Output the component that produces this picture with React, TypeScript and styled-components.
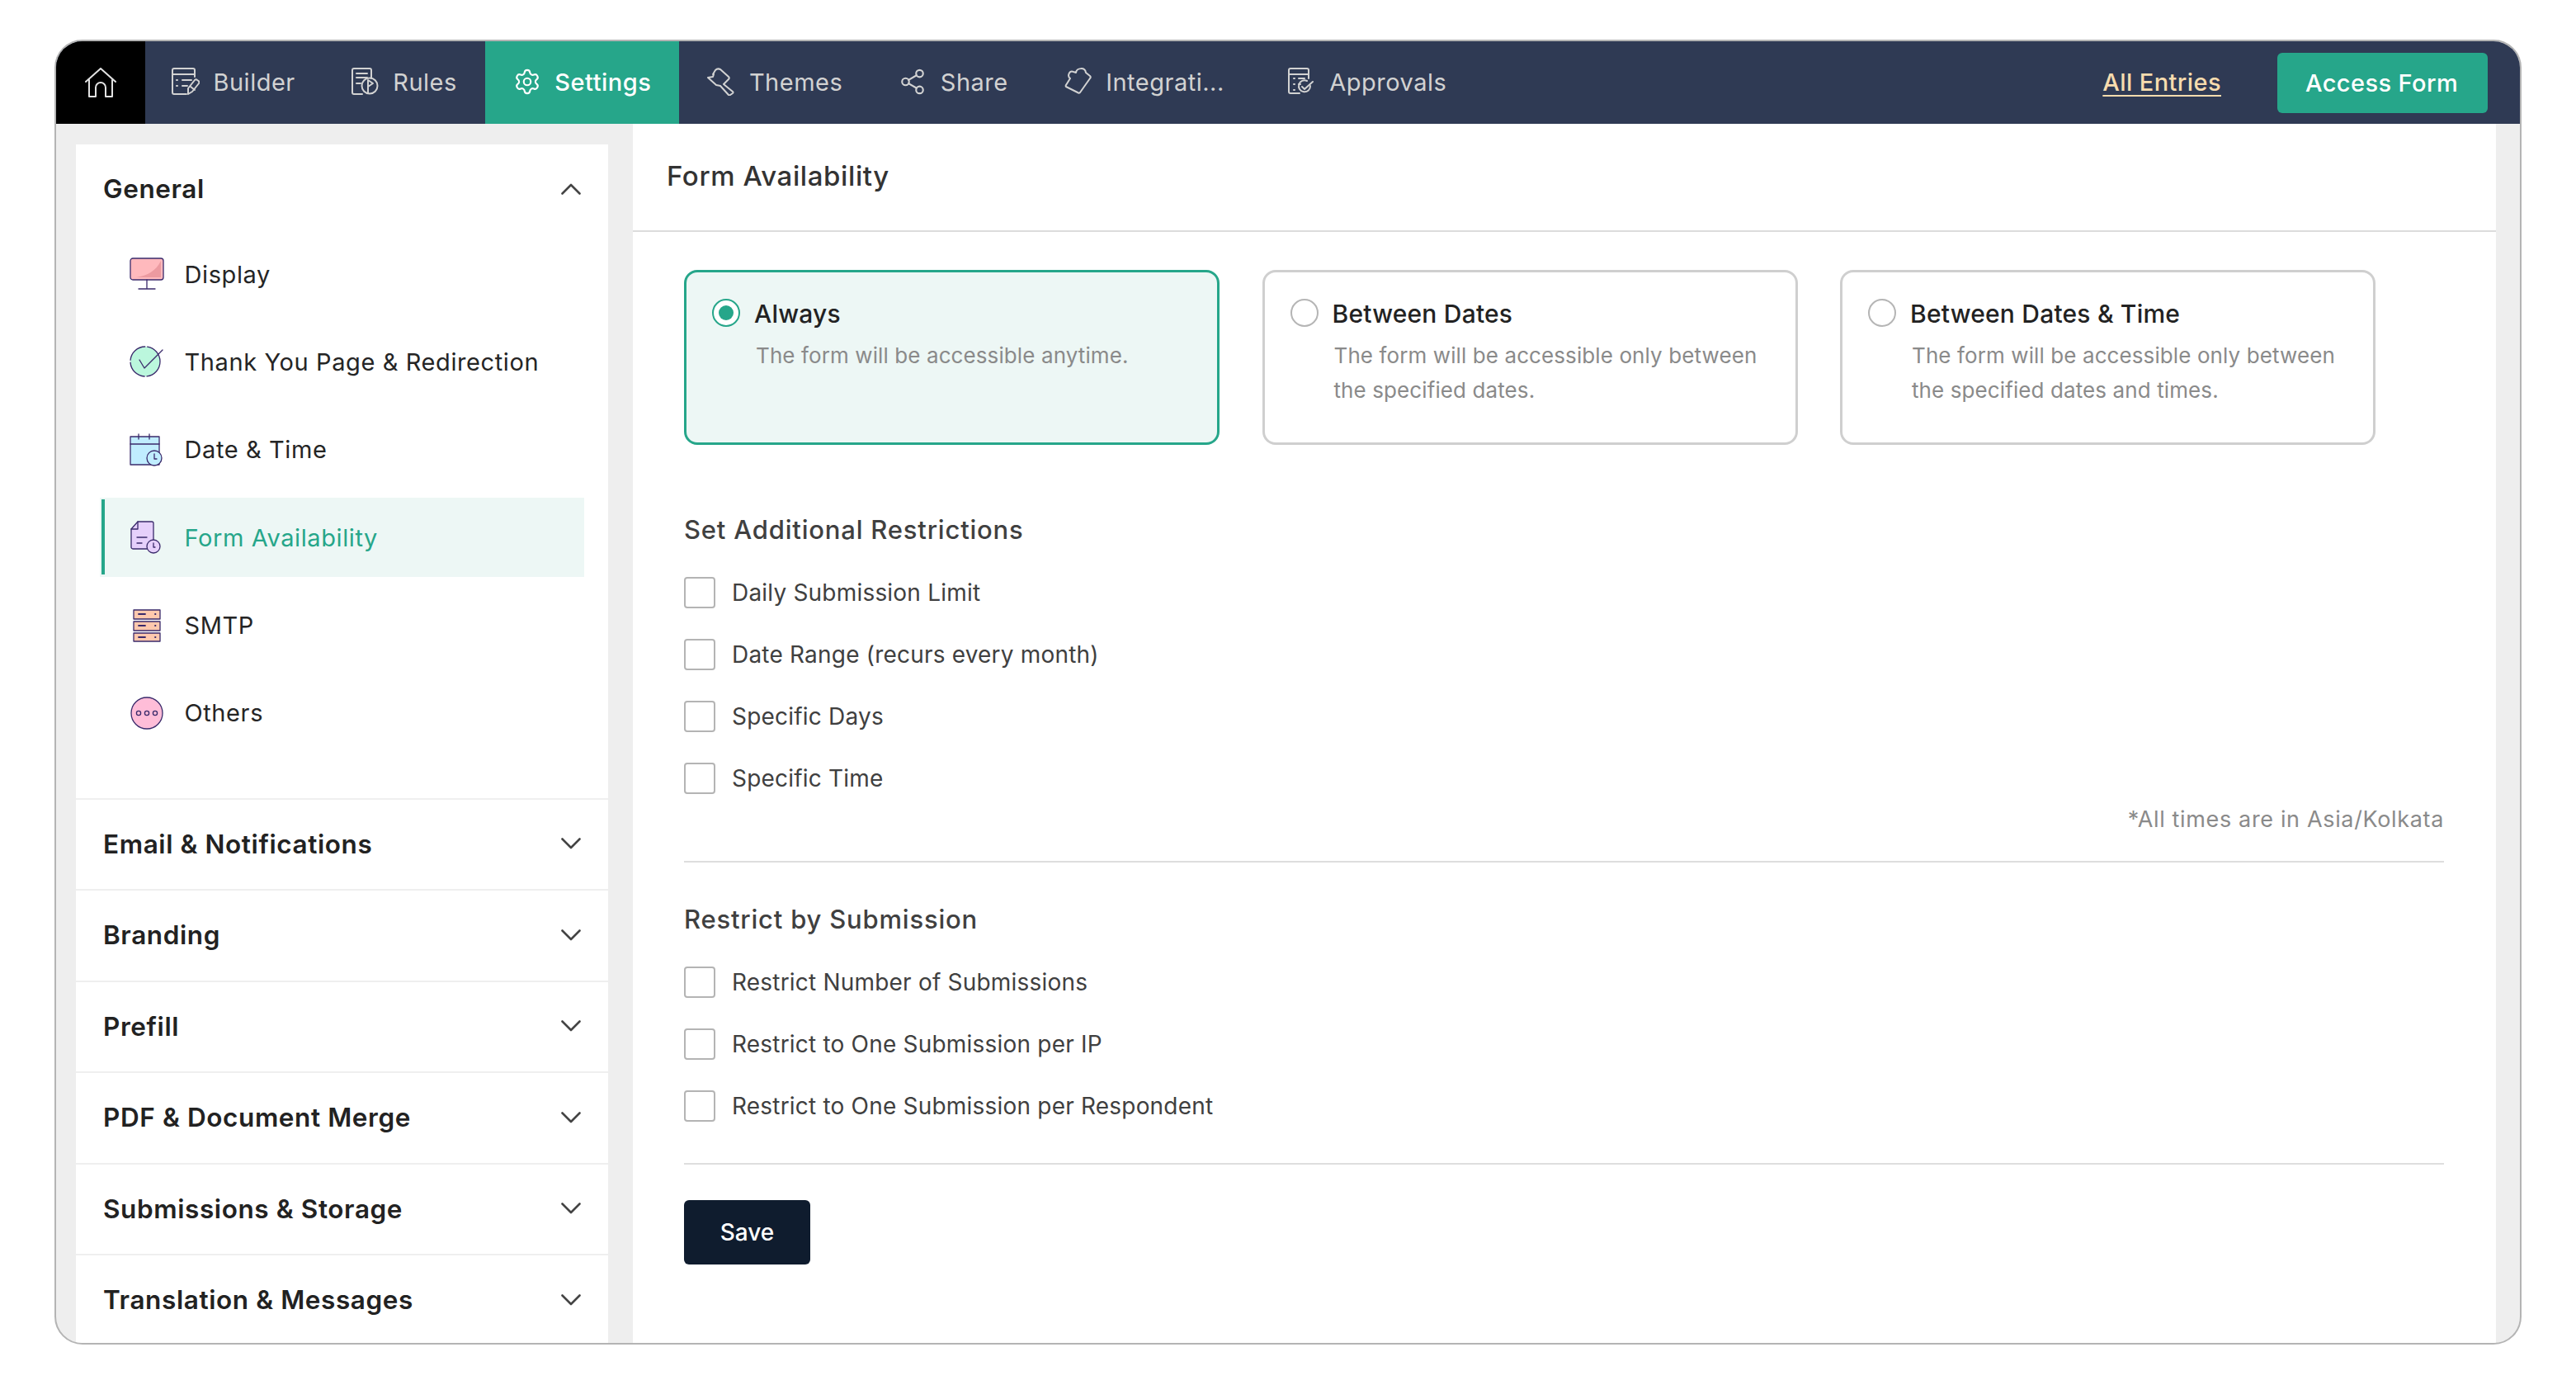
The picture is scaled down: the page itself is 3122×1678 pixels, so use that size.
import React from "react";
import styled, { createGlobalStyle } from "styled-components";
import { Settings as SettingsIcon, Share2 } from "lucide-react";

const Global = createGlobalStyle`
  html, body { margin: 0; padding: 0; background: #fff; }
  * { box-sizing: border-box; }
  body { font-family: Inter, "Noto Sans", sans-serif; -webkit-font-smoothing: antialiased; }
`;

const Page = styled.div`
  width: 3122px;
  height: 1678px;
  padding: 48px 0 0 66px;
  background: #fff;
`;
const Frame = styled.div`
  width: 2990px;
  height: 1581px;
  border: 2px solid #b4b4b4;
  border-radius: 34px;
  overflow: hidden;
  display: flex;
  flex-direction: column;
  background: #eeeeee;
`;
const Nav = styled.nav`
  height: 100px;
  flex: none;
  display: flex;
  align-items: stretch;
  background: #2f3a54;
`;
const HomeTab = styled.div`
  width: 108px;
  background: #000;
  display: flex;
  align-items: center;
  justify-content: center;
  color: #e2e2e2;
`;
const NavItem = styled.div<{ $active?: boolean; $extra?: number; $first?: boolean }>`
  display: flex;
  align-items: center;
  gap: 16.5px;
  padding: 0 34px 2px ${(p) => (p.$first ? 32 : 34)}px;
  margin-right: ${(p) => p.$extra ?? 0}px;
  background: ${(p) => (p.$active ? "#26a68a" : "transparent")};
  color: ${(p) => (p.$active ? "#ffffff" : "#d2d2d2")};
  font-size: 29px;
  font-weight: ${(p) => (p.$active ? 500 : 400)};
  letter-spacing: 0.5px;
  white-space: nowrap;
  svg { flex: none; }
`;
const NavSpacer = styled.div`
  flex: 1;
`;
const AllEntries = styled.a`
  align-self: center;
  margin-right: 68px;
  margin-bottom: 2px;
  color: #f7dcae;
  font-size: 29px;
  font-weight: 500;
  letter-spacing: 0.4px;
  text-decoration: underline;
  text-underline-offset: 5px;
  text-decoration-thickness: 2px;
`;
const AccessButton = styled.button`
  align-self: center;
  width: 255px;
  height: 73px;
  margin-right: 39px;
  padding: 0 2px 0 0;
  border: 0;
  border-radius: 6px;
  background: #26a68a;
  color: #fff;
  font-family: inherit;
  font-size: 29px;
  font-weight: 500;
  letter-spacing: 0.4px;
`;
const Body = styled.div`
  flex: 1;
  min-height: 0;
  display: flex;
  align-items: stretch;
  padding-left: 24px;
`;
const Sidebar = styled.aside`
  width: 645px;
  margin-top: 25px;
  background: #fff;
  flex: none;
  overflow: hidden;
`;
const SectionHeader = styled.div`
  height: 109px;
  padding: 0 33px 2px 33px;
  display: flex;
  align-items: center;
  justify-content: space-between;
  font-size: 31.5px;
  font-weight: 600;
  letter-spacing: 0.6px;
  color: #222;
`;
const AccordionRow = styled(SectionHeader)`
  height: 110.5px;
  border-top: 2px solid #efefef;
`;
const MenuList = styled.ul`
  list-style: none;
  margin: 0;
  padding: 0 29px 55px;
  display: flex;
  flex-direction: column;
  gap: 10.4px;
`;
const MenuItem = styled.li<{ $active?: boolean }>`
  position: relative;
  height: 96px;
  display: flex;
  align-items: center;
  gap: 24.5px;
  padding-left: 36px;
  font-size: 29px;
  font-weight: 400;
  letter-spacing: 0.6px;
  color: ${(p) => (p.$active ? "#26a68a" : "#252525")};
  background: ${(p) => (p.$active ? "#edf7f5" : "transparent")};
  ${(p) =>
    p.$active
      ? `&::before { content: ""; position: absolute; left: 2px; top: 2px; bottom: 3px; width: 4px; background: #26a68a; }`
      : ""}
`;
const Main = styled.main`
  width: 2258px;
  margin-left: 30px;
  flex: none;
  background: #fff;
  display: flex;
  flex-direction: column;
`;
const MainHeader = styled.header`
  height: 131px;
  flex: none;
  display: flex;
  align-items: center;
  padding: 0 0 4px 41px;
  border-bottom: 2px solid #dcdcdc;
  font-size: 33px;
  font-weight: 500;
  letter-spacing: 0.6px;
  color: #333;
`;
const MainContent = styled.div`
  padding: 46px 63px 0 62px;
  display: flex;
  flex-direction: column;
`;
const CardRow = styled.div`
  display: grid;
  grid-template-columns: repeat(3, 649px);
  gap: 51.5px;
`;
const Card = styled.div<{ $active?: boolean }>`
  height: 212px;
  border: 3px solid ${(p) => (p.$active ? "#26a68a" : "#cfcfcf")};
  border-radius: 16px;
  background: ${(p) => (p.$active ? "#edf7f5" : "#fff")};
  padding: 32px 20px 0 31px;
  display: flex;
  gap: 17px;
  align-items: flex-start;
`;
const Radio = styled.span<{ $active?: boolean }>`
  flex: none;
  width: 34px;
  height: 34px;
  border-radius: 50%;
  border: 2px solid ${(p) => (p.$active ? "#26a68a" : "#b5b5b5")};
  background: #fff;
  display: flex;
  align-items: center;
  justify-content: center;
  &::after {
    content: "";
    width: 18px;
    height: 18px;
    border-radius: 50%;
    background: ${(p) => (p.$active ? "#26a68a" : "transparent")};
  }
`;
const CardTitle = styled.div`
  font-size: 30px;
  line-height: 36px;
  font-weight: 500;
  letter-spacing: 0.2px;
  color: #222;
`;
const CardDesc = styled.div`
  margin-top: 12px;
  margin-left: 2px;
  max-width: 530px;
  font-size: 26px;
  line-height: 41.5px;
  color: #8a8a8a;
  letter-spacing: 0.1px;
`;
const SectionTitle = styled.h3<{ $top: number }>`
  margin: ${(p) => p.$top}px 0 0;
  font-size: 31px;
  line-height: 40px;
  font-weight: 500;
  letter-spacing: 0.8px;
  color: #404040;
`;
const CheckList = styled.div`
  margin-top: 37px;
  display: flex;
  flex-direction: column;
  gap: 37px;
`;
const CheckRow = styled.label`
  display: flex;
  align-items: center;
  gap: 20px;
  height: 38px;
  font-size: 28px;
  letter-spacing: 0.2px;
  color: #404040;
`;
const Box = styled.span`
  flex: none;
  width: 38px;
  height: 38px;
  border: 2px solid #b4b4b4;
  border-radius: 4px;
  background: #fff;
`;
const Note = styled.div`
  margin-top: 13px;
  text-align: right;
  font-size: 27px;
  line-height: 36px;
  letter-spacing: 0.65px;
  color: #8a8a8a;
`;
const Divider = styled.hr<{ $top: number }>`
  width: 100%;
  height: 2px;
  margin: ${(p) => p.$top}px 0 0;
  border: 0;
  background: #dedede;
`;
const SaveButton = styled.button`
  margin-top: 43px;
  width: 153px;
  height: 78px;
  border: 0;
  border-radius: 6px;
  background: #0f1c2e;
  color: #fff;
  font-family: inherit;
  font-size: 28px;
  font-weight: 500;
`;

const NavSvg: React.FC<{ children: React.ReactNode }> = ({ children }) => (
  <svg width="34" height="34" viewBox="0 0 34 34" fill="none" stroke="currentColor" strokeWidth="2" strokeLinecap="round" strokeLinejoin="round">
    {children}
  </svg>
);
const HomeIcon = () => (
  <svg width="40" height="36" viewBox="0 0 40 36" fill="none" stroke="currentColor" strokeWidth="2" strokeLinecap="round" strokeLinejoin="round">
    <path d="M2 17 20 1l18 16M6 15v20h8V24a6 6 0 0 1 12 0v11h8V15" />
  </svg>
);
const BuilderIcon = () => (
  <NavSvg>
    <path d="M28 11V3a2 2 0 0 0-2-2H3a2 2 0 0 0-2 2v27a2 2 0 0 0 2 2h15" />
    <path d="M1 8h27M6 15h1M13 15h11M6 22h1M13 22h6" />
    <path d="M20 32l0-7 8-10c1-1 2-1 3 0l1.500 1c1 1 1 2 .5 3l-8 10z" />
    <path d="M23 23l5 4" />
  </NavSvg>
);
const RulesIcon = () => (
  <NavSvg>
    <path d="M24 13V3a2 2 0 0 0-2-2H3a2 2 0 0 0-2 2v27a2 2 0 0 0 2 2h10" />
    <path d="M6 7h13M6 12h13M6 19h5" />
    <circle cx="22" cy="22" r="9.500" />
    <path d="M20 31V15l6 4-6 4" />
  </NavSvg>
);
const ThemesIcon = () => (
  <NavSvg>
    <path d="M1 12l6-1 1-3-1 0 3-5c2-2 4-2 6-1l10 9c1 1 1 2 0 3l-4 4-2 2 11 9c1 1 1 1 0 2l-3 2c-1 1-1 1-2 0L16 22l-5-1z" />
  </NavSvg>
);
const PuzzleIcon = () => (
  <NavSvg>
    <path d="M2 21l5-8C3 10 6 3 11 5l3 1c1-6 11-7 12 0l5 4c1 1 1 2 0 3L19 30c-1 1-2 1-3 0L2 23c-.5-.5-.5-1.500 0-2z" />
  </NavSvg>
);
const ApprovalsIcon = () => (
  <NavSvg>
    <path d="M25 13V3a2 2 0 0 0-2-2H3a2 2 0 0 0-2 2v26a2 2 0 0 0 2 2h11" />
    <path d="M1 8h24M7 13h1M13 13h7M7 20h1M13 20h2M7 27h1" />
    <path d="M27 22a7 7 0 1 1-4-6" />
    <path d="M17 23l3 3 10-9" />
  </NavSvg>
);
const Chevron: React.FC<{ $up?: boolean }> = ({ $up }) => (
  <svg width="24" height="14" viewBox="0 0 24 14" fill="none" stroke="#444" strokeWidth="2.6" strokeLinecap="round" strokeLinejoin="round">
    <path d={$up ? "M1.5 12.5 12 2l10.5 10.5" : "M1.5 1.5 12 12 22.5 1.5"} />
  </svg>
);

const INK = "#3a2a6b";
const MenuSvg: React.FC<{ children: React.ReactNode }> = ({ children }) => (
  <svg width="42" height="40" viewBox="0 0 42 40" fill="none" stroke={INK} strokeWidth="1.3" strokeLinecap="round" strokeLinejoin="round" style={{ flex: "none" }}>
    {children}
  </svg>
);
const DisplayIcon = () => (
  <MenuSvg>
    <rect x="1" y="1" width="40" height="26" rx="3" fill="#ffb9bd" />
    <path d="M38 4v20H8c14-2 24-8 30-20z" fill="#ec9aa0" stroke="none" />
    <path d="M21 27v10M11 38h20" />
  </MenuSvg>
);
const ThanksIcon = () => (
  <MenuSvg>
    <circle cx="19" cy="20" r="18" fill="#bbf7dd" strokeDasharray="26 3" />
    <path d="M12 18l6 10L40 6" />
  </MenuSvg>
);
const DateIcon = () => (
  <MenuSvg>
    <path d="M1 4h35v34H1z" fill="#c0edff" />
    <path d="M1 13h35M11 1v6M24 1v6" />
    <circle cx="30" cy="30" r="9" fill="#c0edff" />
    <path d="M30 25v6h3" />
  </MenuSvg>
);
const FormIcon = () => (
  <MenuSvg>
    <path d="M10 1h17a2 2 0 0 1 2 2v31H4a2 2 0 0 1-2-2V10z" fill="#e6d0fb" />
    <path d="M10 1v9H2M9 20h12M9 27h6" />
    <circle cx="29" cy="31" r="8" fill="#e6d0fb" />
    <path d="M29 27v5h2" />
  </MenuSvg>
);
const SmtpIcon = () => (
  <MenuSvg>
    <rect x="5" y="1" width="32" height="11" fill="#ffc8ad" />
    <rect x="5" y="15" width="32" height="11" fill="#ffc8ad" />
    <rect x="5" y="29" width="32" height="10" fill="#ffc8ad" />
    <path d="M11 6h8M31 6h.5M11 20h8M31 20h.5M11 34h8M31 34h.5" strokeWidth="1.8" />
  </MenuSvg>
);
const OthersIcon = () => (
  <MenuSvg>
    <circle cx="21" cy="20" r="19" fill="#ffbdd8" />
    <circle cx="11" cy="20" r="2.6" />
    <circle cx="21" cy="20" r="2.6" />
    <circle cx="31" cy="20" r="2.6" />
  </MenuSvg>
);

const menu = [
  { label: "Display", icon: <DisplayIcon /> },
  { label: "Thank You Page & Redirection", icon: <ThanksIcon /> },
  { label: "Date & Time", icon: <DateIcon /> },
  { label: "Form Availability", icon: <FormIcon />, active: true },
  { label: "SMTP", icon: <SmtpIcon /> },
  { label: "Others", icon: <OthersIcon /> },
];
const sections = ["Email & Notifications", "Branding", "Prefill", "PDF & Document Merge", "Submissions & Storage", "Translation & Messages"];
const cards = [
  { title: "Always", desc: "The form will be accessible anytime.", active: true },
  { title: "Between Dates", desc: "The form will be accessible only between the specified dates." },
  { title: "Between Dates & Time", desc: "The form will be accessible only between the specified dates and times." },
];
const restrictions = ["Daily Submission Limit", "Date Range (recurs every month)", "Specific Days", "Specific Time"];
const submissionRules = ["Restrict Number of Submissions", "Restrict to One Submission per IP", "Restrict to One Submission per Respondent"];

export default function App() {
  return (
    <Page>
      <Global />
      <Frame>
        <Nav>
          <HomeTab>
            <HomeIcon />
          </HomeTab>
          <NavItem $first>
            <BuilderIcon />
            Builder
          </NavItem>
          <NavItem>
            <RulesIcon />
            Rules
          </NavItem>
          <NavItem $active>
            <SettingsIcon size={34} strokeWidth={1.5} />
            Settings
          </NavItem>
          <NavItem>
            <ThemesIcon />
            Themes
          </NavItem>
          <NavItem>
            <Share2 size={34} strokeWidth={1.5} />
            Share
          </NavItem>
          <NavItem $extra={9}>
            <PuzzleIcon />
            Integrati...
          </NavItem>
          <NavItem>
            <ApprovalsIcon />
            Approvals
          </NavItem>
          <NavSpacer />
          <AllEntries>All Entries</AllEntries>
          <AccessButton>Access Form</AccessButton>
        </Nav>
        <Body>
          <Sidebar>
            <SectionHeader>
              General
              <Chevron $up />
            </SectionHeader>
            <MenuList>
              {menu.map((m) => (
                <MenuItem key={m.label} $active={m.active}>
                  {m.icon}
                  {m.label}
                </MenuItem>
              ))}
            </MenuList>
            {sections.map((s) => (
              <AccordionRow key={s}>
                {s}
                <Chevron />
              </AccordionRow>
            ))}
          </Sidebar>
          <Main>
            <MainHeader>Form Availability</MainHeader>
            <MainContent>
              <CardRow>
                {cards.map((c) => (
                  <Card key={c.title} $active={c.active}>
                    <Radio $active={c.active} />
                    <div>
                      <CardTitle>{c.title}</CardTitle>
                      <CardDesc>{c.desc}</CardDesc>
                    </div>
                  </Card>
                ))}
              </CardRow>
              <SectionTitle $top={83}>Set Additional Restrictions</SectionTitle>
              <CheckList>
                {restrictions.map((r) => (
                  <CheckRow key={r}>
                    <Box />
                    {r}
                  </CheckRow>
                ))}
              </CheckList>
              <Note>*All times are in Asia/Kolkata</Note>
              <Divider $top={32} />
              <SectionTitle $top={49}>Restrict by Submission</SectionTitle>
              <CheckList>
                {submissionRules.map((r) => (
                  <CheckRow key={r}>
                    <Box />
                    {r}
                  </CheckRow>
                ))}
              </CheckList>
              <Divider $top={50} />
              <SaveButton>Save</SaveButton>
            </MainContent>
          </Main>
        </Body>
      </Frame>
    </Page>
  );
}
